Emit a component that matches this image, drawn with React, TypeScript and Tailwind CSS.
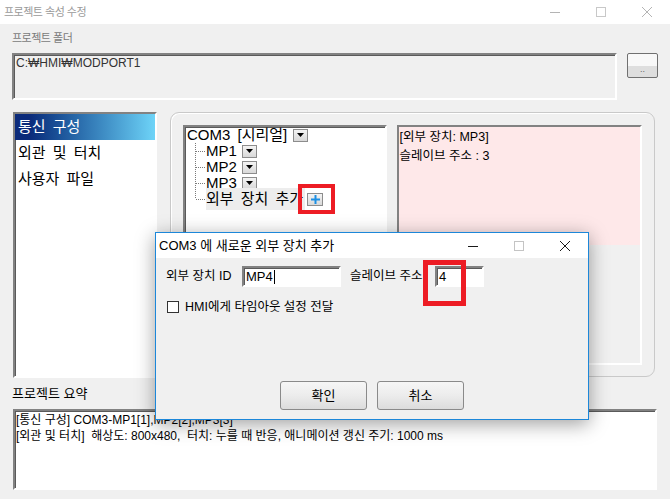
import React from "react";

const FONT = "font-['Liberation_Sans','Noto_Sans_CJK_KR',sans-serif]";

const Sunken = ({ className = "", children }: { className?: string; children?: React.ReactNode }) => (
  <div
    className={`border-2 border-t-[#828282] border-l-[#828282] border-r-white border-b-white shadow-[inset_1px_1px_0_#5a5a5a] ${className}`}
  >
    {children}
  </div>
);

const CaptionButtons = ({ dim }: { dim: boolean }) => {
  const c = dim ? "#b4b4b4" : "#1a1a1a";
  return (
    <div className="ml-auto flex h-full">
      <div className="flex w-[46px] items-center justify-center">
        <svg width="10" height="10" viewBox="0 0 10 10">
          <line x1="0" y1="5.5" x2="10" y2="5.5" stroke={c} strokeWidth="1" />
        </svg>
      </div>
      <div className="flex w-[46px] items-center justify-center">
        <svg width="10" height="10" viewBox="0 0 10 10">
          <rect x="0.5" y="0.5" width="9" height="9" fill="none" stroke={dim ? "#c8c8c8" : "#c4c4c4"} strokeWidth="1" />
        </svg>
      </div>
      <div className="flex w-[46px] items-center justify-center">
        <svg width="10" height="10" viewBox="0 0 10 10">
          <path d="M0 0L10 10M10 0L0 10" stroke={c} strokeWidth="1" />
        </svg>
      </div>
    </div>
  );
};

const DropBtn = () => (
  <span className="inline-flex h-[13px] w-[15px] items-center justify-center border border-[#8c8c8c] bg-gradient-to-b from-[#f4f4f4] to-[#d8d8d8]">
    <svg width="7" height="4" viewBox="0 0 7 4">
      <path d="M0 0H7L3.5 4Z" fill="#000" />
    </svg>
  </span>
);

const PlusBtn = () => (
  <span className="inline-flex h-[13px] w-[16px] items-center justify-center border border-[#8c8c8c] bg-gradient-to-b from-[#f4f4f4] to-[#d8d8d8]">
    <svg width="9" height="9" viewBox="0 0 9 9">
      <path d="M4.5 0V9M0 4.5H9" stroke="#1c8fe3" strokeWidth="2" />
    </svg>
  </span>
);

const Connector = ({ last }: { last?: boolean }) => (
  <svg width="19" height="16" viewBox="0 0 19 16" className="shrink-0">
    <line x1="8.5" y1="0" x2="8.5" y2={last ? 8 : 16} stroke="#7a7a7a" strokeDasharray="1 1" />
    <line x1="9" y1="8.5" x2="18" y2="8.5" stroke="#7a7a7a" strokeDasharray="1 1" />
  </svg>
);

const WinButton = ({ label }: { label: string }) => (
  <button className="h-[29px] w-[87px] rounded-[3px] border border-[#8a8a8a] bg-gradient-to-b from-[#f6f6f6] via-[#ececec] to-[#dcdcdc] text-[13px] text-black">
    {label}
  </button>
);

export default function App() {
  return (
    <div className={`relative h-[499px] w-[670px] overflow-hidden bg-[#f0f0f0] text-black ${FONT}`}>
      {/* title bar */}
      <div className="flex h-[24px] items-center bg-white">
        <span className="pl-[4px] text-[11px] tracking-[-0.5px] text-[#9a9a9a]">프로젝트 속성 수정</span>
        <CaptionButtons dim />
      </div>

      <div className="pl-[12px] pr-[12px]">
        <div className="pt-[7px] text-[11px] leading-[14px] tracking-[-0.5px] text-[#7a7a7a]">프로젝트 폴더</div>

        <div className="mt-[8px] flex items-start gap-[10px]">
          <Sunken className="h-[47px] w-[605px] bg-[#f0f0f0] pl-[2px] text-[12px] leading-[16px] text-[#333]">
            C:₩HMI₩MODPORT1
          </Sunken>
          <button className="flex h-[25px] w-[31px] items-end justify-center rounded-[2px] border border-[#707070] bg-gradient-to-b from-[#f8f8f8] from-50% to-[#dedede] to-50% pb-[3px] text-[9px] leading-[9px] text-[#666]">
            ..
          </button>
        </div>

        <div className="mt-[12px] flex items-start">
          {/* category list */}
          <Sunken className="ml-[1px] h-[266px] w-[144px] bg-white text-[15px] [word-spacing:3px]">
            <div className="flex h-[26px] items-center bg-gradient-to-r from-[#0b2a7a] from-10% to-[#6ed4f8] pl-[3px] text-white">
              통신 구성
            </div>
            <div className="flex h-[26px] items-center pl-[3px]">외관 및 터치</div>
            <div className="flex h-[26px] items-center pl-[3px]">사용자 파일</div>
          </Sunken>

          {/* group box */}
          <div className="ml-[13px] flex h-[265px] w-[485px] gap-[10px] rounded-[9px] border border-[#c9c9c9] px-[12px] pt-[12px] shadow-[inset_1px_1px_0_#fff]">
            <Sunken className="relative h-[240px] w-[204px] bg-white pl-[2px] text-[15px] [word-spacing:3px]">
              <div className="flex h-[16px] items-center gap-[6px]">
                <span>COM3 [시리얼]</span>
                <DropBtn />
              </div>
              {["MP1", "MP2", "MP3"].map((m) => (
                <div key={m} className="flex h-[16px] items-center">
                  <Connector />
                  <span className="mr-[5px]">{m}</span>
                  <DropBtn />
                </div>
              ))}
              <div className="flex h-[16px] items-center">
                <Connector last />
                <span className="bg-[#ededed] pr-[2px]">외부 장치 추가</span>
                <span className="ml-[2px]">
                  <PlusBtn />
                </span>
              </div>
              <div className="absolute left-[113px] top-[57px] h-[30px] w-[37px] border-[4px] border-[#ed1c24]" />
            </Sunken>

            <Sunken className="h-[240px] w-[246px] bg-[#f0f0f0] text-[12.5px] leading-[19px]">
              <div className="h-[118px] bg-[#fee8e9] pl-[1px] pt-[1px]">
                <div>[외부 장치: MP3]</div>
                <div>슬레이브 주소 : 3</div>
              </div>
            </Sunken>
          </div>
        </div>

        <div className="mt-[9px] text-[13px] leading-[14px]">프로젝트 요약</div>
        <Sunken className="mt-[8px] ml-[1px] h-[81px] w-[644px] bg-white pl-[1px] pt-[1px] text-[12px] leading-[16px]">
          <div>[통신 구성] COM3-MP1[1],MP2[2],MP3[3]</div>
          <div className="whitespace-pre">[외관 및 터치]  해상도: 800x480,  터치: 누를 때 반응, 애니메이션 갱신 주기: 1000 ms</div>
        </Sunken>
      </div>

      {/* dialog */}
      <div className="absolute left-[155px] top-[232px] flex h-[188px] w-[434px] flex-col border border-[#1c87d9] bg-[#f0f0f0] shadow-[0_4px_18px_rgba(0,0,0,0.38)]">
        <div className="flex h-[25px] shrink-0 items-center bg-white">
          <span className="pl-[3px] text-[13px]">COM3 에 새로운 외부 장치 추가</span>
          <CaptionButtons dim={false} />
        </div>
        <div className="relative flex-1 text-[12.5px]">
          <div className="mt-[8px] flex items-center pl-[10px]">
            <span className="w-[76px]">외부 장치 ID</span>
            <Sunken className="flex h-[21px] w-[99px] items-center bg-white pl-[2px] text-[13px]">
              MP4<span className="ml-[1px] inline-block h-[14px] w-[1px] bg-black" />
            </Sunken>
            <span className="ml-[9px] w-[85px]">슬레이브 주소</span>
            <Sunken className="flex h-[21px] w-[49px] items-center bg-white pl-[2px] text-[13px]">
              4
            </Sunken>
          </div>
          <div className="mt-[11px] flex items-center pl-[11px]">
            <span className="h-[12px] w-[12px] border border-[#333] bg-white" />
            <span className="ml-[6px]">HMI에게 타임아웃 설정 전달</span>
          </div>
          <div className="absolute bottom-[9px] left-0 right-0 flex justify-center gap-[10px]">
            <WinButton label="확인" />
            <WinButton label="취소" />
          </div>
          <div className="absolute left-[267px] top-[2px] h-[46px] w-[43px] border-[5px] border-[#ed1c24]" />
        </div>
      </div>
    </div>
  );
}
